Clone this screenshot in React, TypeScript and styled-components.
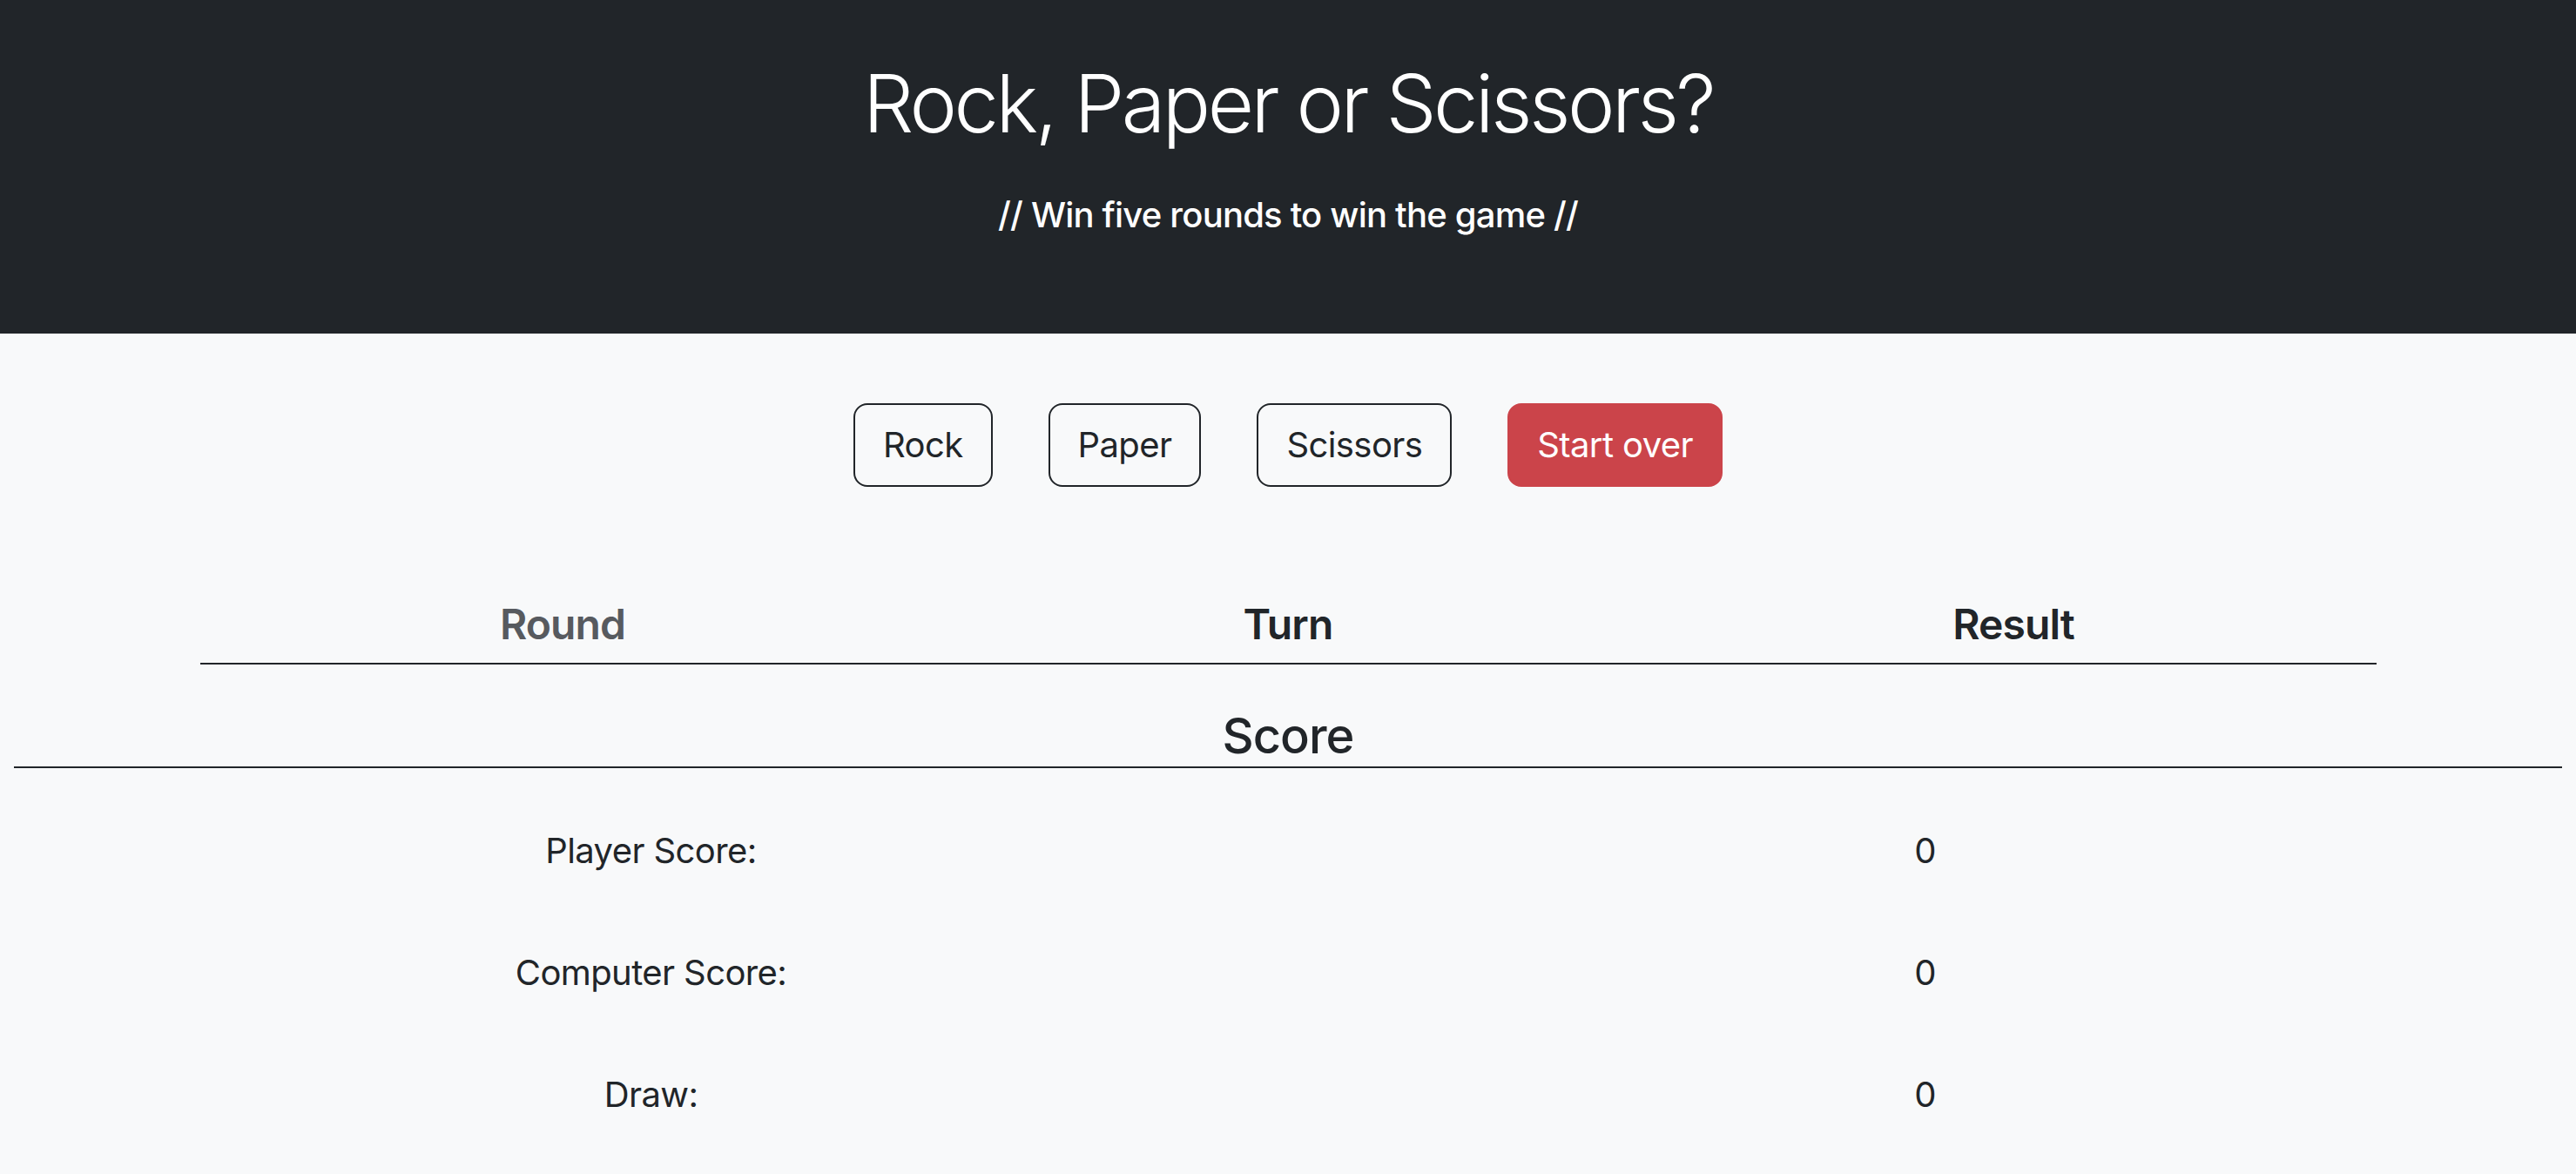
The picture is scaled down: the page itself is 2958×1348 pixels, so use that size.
import React from "react";
import styled, { createGlobalStyle } from "styled-components";

const GlobalStyle = createGlobalStyle`
  html, body {
    margin: 0;
    padding: 0;
    background: #f8f9fa;
  }
  body {
    font-family: Inter, "Open Sans", "Liberation Sans", sans-serif;
    color: #212529;
    -webkit-font-smoothing: antialiased;
  }
  #root {
    min-height: 1348px;
    background: #f8f9fa;
  }
`;

const Header = styled.header`
  background: #212529;
  color: #ffffff;
  display: flex;
  flex-direction: column;
  align-items: center;
  padding: 64px 0 112px;
`;

const Title = styled.h1`
  margin: 0;
  font-size: 92px;
  font-weight: 300;
  line-height: 1.2;
  letter-spacing: -3.5px;
`;

const Subtitle = styled.p`
  margin: 49px 0 0;
  font-size: 40px;
  font-weight: 500;
  line-height: 1.2;
  letter-spacing: -0.8px;
`;

const Main = styled.main`
  display: flex;
  flex-direction: column;
  align-items: stretch;
  padding-top: 80px;
`;

const ButtonBar = styled.div`
  display: flex;
  justify-content: center;
  gap: 64px;
`;

const Button = styled.button<{ $variant?: "outline" | "danger" }>`
  font-family: inherit;
  font-size: 40px;
  font-weight: 400;
  line-height: 1.5;
  letter-spacing: -0.6px;
  padding: 16px 32px;
  border-radius: 16px;
  border: 2px solid ${(p) => (p.$variant === "danger" ? "#cb444a" : "#212529")};
  background: ${(p) => (p.$variant === "danger" ? "#cb444a" : "transparent")};
  color: ${(p) => (p.$variant === "danger" ? "#ffffff" : "#212529")};
  cursor: pointer;
`;

const RoundTable = styled.div`
  width: 2499px;
  margin: 114px auto 0;
`;

const RoundHead = styled.div`
  display: grid;
  grid-template-columns: repeat(3, 1fr);
  padding: 8px 0 8px;
  border-bottom: 2px solid #212529;
`;

const HeadCell = styled.div<{ $muted?: boolean }>`
  text-align: center;
  font-size: 48px;
  font-weight: 600;
  line-height: 1.5;
  letter-spacing: -0.9px;
  color: ${(p) => (p.$muted ? "#575a5f" : "#212529")};
`;

const ScoreSection = styled.section`
  margin: 45px 16px 0;
`;

const ScoreTitle = styled.h3`
  margin: 0;
  padding-top: 4px;
  text-align: center;
  font-size: 56px;
  font-weight: 500;
  line-height: 1.2;
  letter-spacing: -1px;
  border-bottom: 2px solid #212529;
`;

const ScoreRows = styled.div`
  padding-top: 25px;
`;

const ScoreRow = styled.div`
  display: grid;
  grid-template-columns: 1fr 1fr;
  height: 140px;
  align-items: center;
`;

const ScoreCell = styled.div`
  text-align: center;
  font-size: 40px;
  line-height: 1.5;
  letter-spacing: -0.6px;
`;

const rows = [
  { label: "Player Score:", value: 0 },
  { label: "Computer Score:", value: 0 },
  { label: "Draw:", value: 0 },
];

export default function App() {
  return (
    <>
      <GlobalStyle />
      <Header>
        <Title>Rock, Paper or Scissors?</Title>
        <Subtitle>// Win five rounds to win the game //</Subtitle>
      </Header>
      <Main>
        <ButtonBar>
          <Button>Rock</Button>
          <Button>Paper</Button>
          <Button>Scissors</Button>
          <Button $variant="danger">Start over</Button>
        </ButtonBar>
        <RoundTable>
          <RoundHead>
            <HeadCell $muted>Round</HeadCell>
            <HeadCell>Turn</HeadCell>
            <HeadCell>Result</HeadCell>
          </RoundHead>
        </RoundTable>
        <ScoreSection>
          <ScoreTitle>Score</ScoreTitle>
          <ScoreRows>
            {rows.map((r) => (
              <ScoreRow key={r.label}>
                <ScoreCell>{r.label}</ScoreCell>
                <ScoreCell>{r.value}</ScoreCell>
              </ScoreRow>
            ))}
          </ScoreRows>
        </ScoreSection>
      </Main>
    </>
  );
}
